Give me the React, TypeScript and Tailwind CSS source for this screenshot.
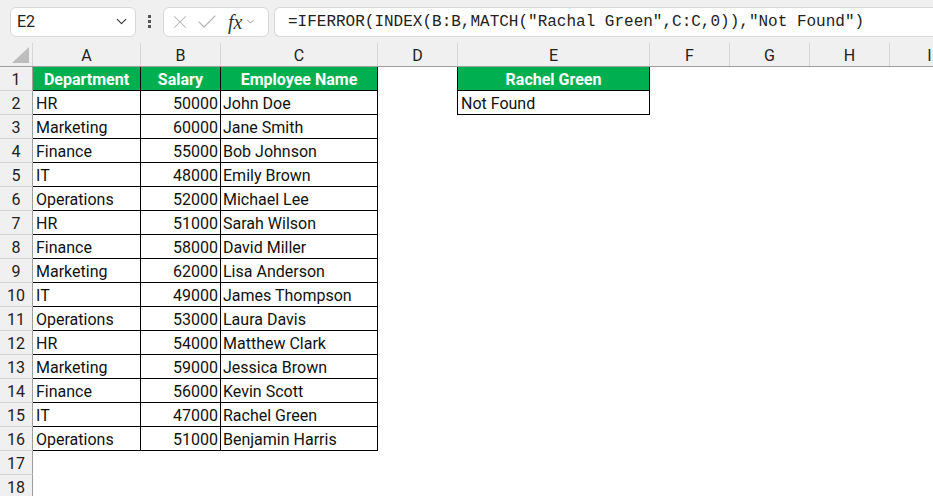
import { ChevronDown, X, Check } from "lucide-react";

const ROWS = [
    ["HR", "50000", "John Doe"],
    ["Marketing", "60000", "Jane Smith"],
    ["Finance", "55000", "Bob Johnson"],
    ["IT", "48000", "Emily Brown"],
    ["Operations", "52000", "Michael Lee"],
    ["HR", "51000", "Sarah Wilson"],
    ["Finance", "58000", "David Miller"],
    ["Marketing", "62000", "Lisa Anderson"],
    ["IT", "49000", "James Thompson"],
    ["Operations", "53000", "Laura Davis"],
    ["HR", "54000", "Matthew Clark"],
    ["Marketing", "59000", "Jessica Brown"],
    ["Finance", "56000", "Kevin Scott"],
    ["IT", "47000", "Rachel Green"],
    ["Operations", "51000", "Benjamin Harris"],
];

const COLS = [
    { name: "A", w: "w-[108px]" },
    { name: "B", w: "w-[80px]" },
    { name: "C", w: "w-[157px]" },
    { name: "D", w: "w-[80px]" },
    { name: "E", w: "w-[192px]" },
    { name: "F", w: "w-[80px]" },
    { name: "G", w: "w-[80px]" },
    { name: "H", w: "w-[80px]" },
    { name: "I", w: "w-[80px]" },
];

function RowHead({ n }: { n: number }) {
    return (
        <div className="w-[33px] shrink-0 h-full bg-[#f0f0f0] border-r border-b border-r-[#9e9e9e] border-b-[#d6d6d6] flex items-center justify-center pt-[2px] text-[16px] text-[#222]">
            {n}
        </div>
    );
}

export default function App() {
    return (
        <div className="w-[933px] h-[496px] overflow-hidden bg-white flex flex-col font-['Roboto',sans-serif] text-[#111]">

            {/* Formula bar */}
            <div className="h-[43px] shrink-0 bg-[#f0f0f0] flex items-center pl-[10px] gap-0">
                <div className="w-[126px] h-[30px] bg-white border border-[#d8d8d8] rounded-[6px] flex items-center justify-between pl-[6px] pr-[5px]">
                    <span className="text-[16px] text-[#222]">E2</span>
                    <ChevronDown size={17} strokeWidth={1.6} className="text-[#333]" />
                </div>
                <div className="w-[27px] flex flex-col items-center gap-[2px]">
                    <div className="w-[3px] h-[3px] bg-[#555]" />
                    <div className="w-[3px] h-[3px] bg-[#555]" />
                    <div className="w-[3px] h-[3px] bg-[#555]" />
                </div>
                <div className="w-[106px] h-[30px] bg-white border border-[#d8d8d8] rounded-[6px] flex items-center pl-[5px]">
                    <X size={22} strokeWidth={1.1} className="text-[#b5b5b5]" />
                    <Check size={24} strokeWidth={1.1} className="text-[#b5b5b5] ml-[4px]" />
                    <span className="ml-[9px] font-['Liberation_Serif',serif] italic text-[20px] text-[#333] leading-none">fx</span>
                    <ChevronDown size={13} strokeWidth={1.4} className="text-[#777] ml-[2px]" />
                </div>
                <div className="ml-[5px] flex-1 h-[30px] bg-white border border-r-0 border-[#d8d8d8] rounded-l-[6px] flex items-center pl-[13px] font-['Liberation_Mono',monospace] text-[16px] text-[#222] whitespace-nowrap">
                    =IFERROR(INDEX(B:B,MATCH("Rachal Green",C:C,0)),"Not Found")
                </div>
            </div>

            {/* Column headers */}
            <div className="h-[24px] shrink-0 flex bg-[#f0f0f0] border-b border-[#9e9e9e]">
                <div className="w-[33px] shrink-0 relative border-r border-[#d6d6d6]">
                    <div className="absolute right-[3px] bottom-[3px] w-0 h-0 border-l-[17px] border-l-transparent border-b-[16px] border-b-[#bdbdbd]" />
                </div>
                {COLS.map(c => (
                    <div key={c.name} className={`${c.w} shrink-0 border-r border-[#d6d6d6] flex items-center justify-center pt-[2px] text-[16px] text-[#222]`}>
                        {c.name}
                    </div>
                ))}
            </div>

            {/* Row 1 */}
            <div className="h-[24px] shrink-0 flex">
                <RowHead n={1} />
                <div className="w-[108px] shrink-0 bg-[#00b050] border-r border-b border-black flex items-center justify-center pt-[2px] text-white font-bold text-[16px]">Department</div>
                <div className="w-[80px] shrink-0 bg-[#00b050] border-r border-b border-black flex items-center justify-center pt-[2px] text-white font-bold text-[16px]">Salary</div>
                <div className="w-[157px] shrink-0 bg-[#00b050] border-r border-b border-black flex items-center justify-center pt-[2px] text-white font-bold text-[16px]">Employee Name</div>
                <div className="w-[80px] shrink-0 border-r border-black" />
                <div className="w-[192px] shrink-0 bg-[#00b050] border-r border-b border-black flex items-center justify-center pt-[2px] text-white font-bold text-[16px]">Rachel Green</div>
            </div>

            {/* Data rows */}
            {ROWS.map((r, i) => (
                <div key={i} className="h-[24px] shrink-0 flex">
                    <RowHead n={i + 2} />
                    <div className="w-[108px] shrink-0 border-r border-b border-black flex items-center pt-[2px] pl-[3px] text-[16px]">{r[0]}</div>
                    <div className="w-[80px] shrink-0 border-r border-b border-black flex items-center justify-end pt-[2px] pr-[2px] text-[16px]">{r[1]}</div>
                    <div className="w-[157px] shrink-0 border-r border-b border-black flex items-center pt-[2px] pl-[2px] text-[16px]">{r[2]}</div>
                    {i === 0 && (
                        <>
                            <div className="w-[80px] shrink-0 border-r border-black" />
                            <div className="w-[192px] shrink-0 border-r border-b border-black flex items-center pt-[2px] pl-[3px] text-[16px]">Not Found</div>
                        </>
                    )}
                </div>
            ))}

            {/* Empty rows */}
            {[17, 18].map(n => (
                <div key={n} className="h-[24px] shrink-0 flex">
                    <RowHead n={n} />
                </div>
            ))}
        </div>
    );
}
